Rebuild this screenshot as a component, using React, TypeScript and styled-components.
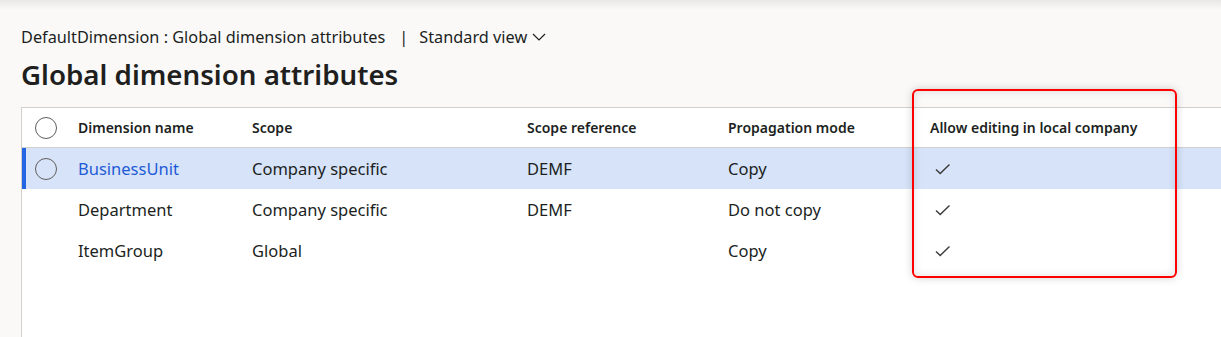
import React from "react";
import styled, { createGlobalStyle } from "styled-components";

const GlobalStyle = createGlobalStyle`
  html, body { margin: 0; padding: 0; }
  body {
    background: #faf9f8;
    font-family: "Noto Sans", "Open Sans", sans-serif;
    color: #201f1e;
    overflow: hidden;
  }
`;

const Page = styled.div`
  position: relative;
  width: 1221px;
  height: 337px;
  overflow: hidden;
  display: flex;
  flex-direction: column;
`;

const TopShadow = styled.div`
  height: 10px;
  background: linear-gradient(to bottom, rgba(0,0,0,0.07), rgba(0,0,0,0));
  flex: none;
`;

const Header = styled.div`
  padding: 16px 0 0 21px;
  display: flex;
  flex-direction: column;
`;

const Breadcrumb = styled.div`
  display: flex;
  align-items: center;
  font-size: 16.3px;
  height: 22px;
  color: #201f1e;
`;

const Sep = styled.span`
  margin: 0 11px 0 14px;
`;

const ViewSelect = styled.span`
  display: inline-flex;
  align-items: center;
  gap: 5px;
`;

const Title = styled.h1`
  margin: 8px 0 0 0;
  font-size: 27.7px;
  font-weight: 600;
  line-height: 36px;
`;

const Grid = styled.div`
  margin: 15px 0 0 21px;
  flex: 1;
  background: #fff;
  border-left: 1px solid #d2d0ce;
  border-top: 1px solid #d2d0ce;
`;

const Row = styled.div<{ $header?: boolean; $selected?: boolean }>`
  position: relative;
  display: grid;
  grid-template-columns: 56px 174px 275px 201px 202px 1fr;
  align-items: center;
  height: ${(p) => (p.$header ? "39px" : "41px")};
  border-bottom: ${(p) => (p.$header ? "1px solid #d2d0ce" : "none")};
  background: ${(p) => (p.$selected ? "#d6e3f8" : "transparent")};
  font-size: ${(p) => (p.$header ? "14px" : "16.5px")};
  font-weight: ${(p) => (p.$header ? 600 : 400)};
  &::before {
    content: "";
    display: ${(p) => (p.$selected ? "block" : "none")};
    position: absolute;
    left: 0;
    top: 0;
    bottom: 0;
    width: 4px;
    background: #2266e3;
  }
`;

const Cell = styled.div<{ $link?: boolean }>`
  white-space: nowrap;
  color: ${(p) => (p.$link ? "#1f5bd6" : "#201f1e")};
`;

const SelectCell = styled.div`
  display: flex;
  justify-content: flex-start;
  padding-left: 13px;
`;

const Radio = styled.span`
  width: 22px;
  height: 22px;
  border-radius: 50%;
  border: 1px solid #605e5c;
  box-sizing: border-box;
  display: block;
`;

const CheckCell = styled.div`
  padding-left: 5px;
  display: flex;
  align-items: center;
`;

const Highlight = styled.div`
  position: absolute;
  left: 912px;
  top: 89px;
  width: 265px;
  height: 189px;
  box-sizing: border-box;
  border: 2px solid #ff0000;
  border-radius: 6px;
  box-shadow: 0 0 8px rgba(0, 0, 0, 0.18), inset 0 0 8px rgba(0, 0, 0, 0.12);
  pointer-events: none;
`;

const Check = () => (
  <svg width="16" height="12" viewBox="0 0 16 12">
    <path d="M1 6.5 L5.2 10.5 L14.5 1.5" fill="none" stroke="#3b3a39" strokeWidth="1.4" />
  </svg>
);

const Chevron = () => (
  <svg width="14" height="10" viewBox="0 0 14 10">
    <path d="M1 2 L7 8 L13 2" fill="none" stroke="#201f1e" strokeWidth="1.2" />
  </svg>
);

type Rec = { name: string; scope: string; ref: string; mode: string; allow: boolean };

const rows: Rec[] = [
  { name: "BusinessUnit", scope: "Company specific", ref: "DEMF", mode: "Copy", allow: true },
  { name: "Department", scope: "Company specific", ref: "DEMF", mode: "Do not copy", allow: true },
  { name: "ItemGroup", scope: "Global", ref: "", mode: "Copy", allow: true },
];

export default function App() {
  return (
    <>
      <GlobalStyle />
      <Page>
        <TopShadow />
        <Header>
          <Breadcrumb>
            <span>DefaultDimension : Global dimension attributes</span>
            <Sep>|</Sep>
            <ViewSelect>
              Standard view <Chevron />
            </ViewSelect>
          </Breadcrumb>
          <Title>Global dimension attributes</Title>
        </Header>
        <Grid>
          <Row $header>
            <SelectCell>
              <Radio />
            </SelectCell>
            <Cell>Dimension name</Cell>
            <Cell>Scope</Cell>
            <Cell>Scope reference</Cell>
            <Cell>Propagation mode</Cell>
            <Cell>Allow editing in local company</Cell>
          </Row>
          {rows.map((r, i) => (
            <Row key={r.name} $selected={i === 0}>
              <SelectCell>{i === 0 && <Radio />}</SelectCell>
              <Cell $link={i === 0}>{r.name}</Cell>
              <Cell>{r.scope}</Cell>
              <Cell>{r.ref}</Cell>
              <Cell>{r.mode}</Cell>
              <CheckCell>{r.allow && <Check />}</CheckCell>
            </Row>
          ))}
        </Grid>
        <Highlight />
      </Page>
    </>
  );
}
